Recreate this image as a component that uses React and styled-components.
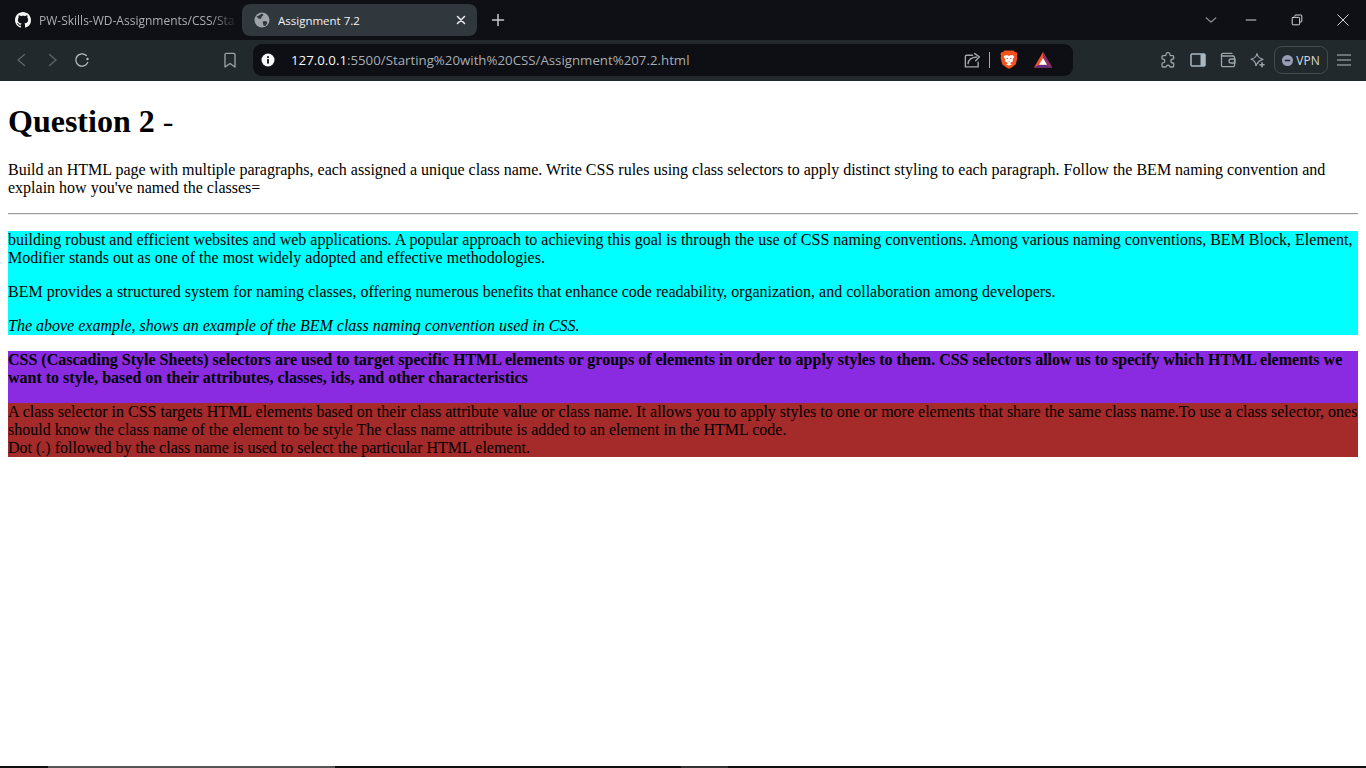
import React from 'react';
import styled, { createGlobalStyle } from 'styled-components';

const GlobalStyle = createGlobalStyle`
    html, body {
        margin: 0;
        padding: 0;
        height: 100%;
        background: #fff;
    }
    #root {
        height: 100%;
    }
`;

const Screen = styled.div`
    display: flex;
    flex-direction: column;
    width: 1366px;
    height: 768px;
    overflow: hidden;
`;

const TabStrip = styled.div`
    display: flex;
    align-items: center;
    height: 40px;
    background: #0e1015;
    font-family: "Open Sans", "Noto Sans", sans-serif;
`;

const Tab = styled.div`
    display: flex;
    align-items: center;
    flex: none;
    height: 32px;
    box-sizing: border-box;
    border-radius: 8px;
    background: ${(p) => (p.$active ? '#30373d' : 'transparent')};
    color: ${(p) => (p.$active ? '#f1f3f4' : '#a9aeb3')};
    font-size: ${(p) => (p.$active ? '11.5px' : '12px')};
    width: ${(p) => (p.$active ? '235px' : '234px')};
    margin-left: ${(p) => (p.$active ? '0' : '8px')};
    padding: ${(p) => (p.$active ? '0 8px 0 12px' : '0 4px 0 7px')};
`;

const TabTitle = styled.span`
    flex: 1;
    margin-left: 8px;
    white-space: nowrap;
    overflow: hidden;
    mask-image: ${(p) => (p.$fade ? 'linear-gradient(to right, #000 86%, transparent 100%)' : 'none')};
`;

const TabClose = styled.button`
    display: flex;
    align-items: center;
    justify-content: center;
    width: 16px;
    height: 16px;
    padding: 0;
    border: 0;
    background: none;
    color: #e8eaed;
`;

const NewTab = styled.button`
    display: flex;
    align-items: center;
    justify-content: center;
    width: 26px;
    height: 26px;
    margin-left: 8px;
    padding: 0;
    border: 0;
    background: none;
    color: #c4c8cc;
`;

const WindowControls = styled.div`
    display: flex;
    align-items: center;
    margin-left: auto;
    color: #f1f1f1;
`;

const ProfileChevron = styled.span`
    display: flex;
    justify-content: center;
    width: 20px;
    margin-right: 7px;
    color: #9aa0a6;
`;

const WindowButton = styled.span`
    display: flex;
    align-items: center;
    justify-content: center;
    width: 46px;
    height: 32px;
`;

const Toolbar = styled.div`
    display: flex;
    align-items: center;
    height: 41px;
    padding: 0 7px 1px;
    box-sizing: border-box;
    background: #22292d;
    color: #9aa5ab;
`;

const ToolButton = styled.span`
    display: flex;
    align-items: center;
    justify-content: center;
    flex: none;
    width: 30px;
    height: 30px;
    color: ${(p) => p.$color || 'inherit'};
`;

const BookmarkSlot = styled(ToolButton)`
    margin-left: 118px;
`;

const AddressBar = styled.div`
    display: flex;
    align-items: center;
    flex: 1;
    height: 32px;
    margin: 0 80px 0 8px;
    padding: 0 14px 0 7px;
    border-radius: 9px;
    background: #0d0f14;
`;

const InfoSlot = styled.span`
    display: flex;
    justify-content: center;
    width: 16px;
`;

const Url = styled.span`
    flex: 1;
    margin-left: 15px;
    font-family: "Open Sans", "Noto Sans", sans-serif;
    font-size: 13.27px;
    color: #a7adb3;
    white-space: nowrap;
`;

const Host = styled.span`
    color: #f4f6f8;
`;

const ShareSlot = styled.span`
    display: flex;
    color: #a2a8ac;
`;

const BarDivider = styled.span`
    width: 1px;
    height: 16px;
    margin: 0 10px 0 8px;
    background: #a2a8ac;
`;

const BatSlot = styled.span`
    display: flex;
    margin: 0 7px 0 16px;
`;

const VpnPill = styled.div`
    display: flex;
    align-items: center;
    justify-content: center;
    flex: none;
    gap: 3px;
    width: 54px;
    height: 28px;
    margin: 0 1px;
    box-sizing: border-box;
    border: 1px solid #414a50;
    border-radius: 8px;
    font-family: "Open Sans", "Noto Sans", sans-serif;
    font-size: 12px;
    color: #d5d9dc;
`;

const Page = styled.main`
    flex: 1;
    padding: 22px 8px 0;
    min-height: 0;
    background: #fff;
    color: #000;
    font-family: "Liberation Serif", "Times New Roman", serif;
    font-size: 16px;
    line-height: 18px;
`;

const Heading = styled.h1`
    margin: 0 0 21px;
    font-size: 32px;
    line-height: 37px;
    font-weight: bold;
`;

const Dash = styled.span`
    font-weight: normal;
`;

const Question = styled.p`
    margin: 0;
`;

const Rule = styled.hr`
    height: 0;
    margin: 16px 0;
    border: 0;
    border-top: 1px solid #9a9a9a;
    border-bottom: 1px solid #eee;
`;

const Note = styled.section`
    background: ${(p) => p.$bg};
    padding-bottom: ${(p) => p.$pad || '0'};
    margin-top: ${(p) => p.$top || '0'};
    font-weight: ${(p) => (p.$bold ? 'bold' : 'normal')};
`;

const NoteText = styled.p`
    margin: 0;
    & + & {
        margin-top: 16px;
    }
    font-style: ${(p) => (p.$italic ? 'italic' : 'normal')};
`;

const TaskbarEdge = styled.div`
    display: flex;
    flex: none;
    height: 2px;
    background: #111;
`;

const EdgePiece = styled.span`
    flex: none;
    width: ${(p) => p.$width}px;
    background: ${(p) => p.$color || 'transparent'};
`;

const Svg = ({ size = 16, children, fill = 'none', sw = 1.3 }) => (
    <svg width={size} height={size} viewBox="0 0 16 16" fill={fill} stroke={fill === 'none' ? 'currentColor' : 'none'} strokeWidth={sw} strokeLinecap="round" strokeLinejoin="round">
        {children}
    </svg>
);

const GithubIcon = () => (
    <svg width="16" height="16" viewBox="0 0 16 16" fill="#f5f5f5">
        <path d="M8 0C3.58 0 0 3.58 0 8c0 3.54 2.29 6.53 5.47 7.59.4.07.55-.17.55-.38 0-.19-.01-.82-.01-1.49-2.01.37-2.53-.49-2.69-.94-.09-.23-.48-.94-.82-1.13-.28-.15-.68-.52-.01-.53.63-.01 1.08.58 1.23.82.72 1.21 1.87.87 2.33.66.07-.52.28-.87.51-1.07-1.78-.2-3.64-.89-3.64-3.95 0-.87.31-1.59.82-2.15-.08-.2-.36-1.02.08-2.12 0 0 .67-.21 2.2.82.64-.18 1.32-.27 2-.27s1.36.09 2 .27c1.53-1.04 2.2-.82 2.2-.82.44 1.1.16 1.92.08 2.12.51.56.82 1.27.82 2.15 0 3.07-1.87 3.75-3.65 3.95.29.25.54.73.54 1.48 0 1.07-.01 1.93-.01 2.2 0 .21.15.46.55.38A8.01 8.01 0 0 0 16 8c0-4.42-3.58-8-8-8z" />
    </svg>
);

const GlobeIcon = () => (
    <svg width="16" height="16" viewBox="0 0 16 16">
        <circle cx="8" cy="8" r="7.5" fill="#9ea4a9" />
        <path d="M2.5 4.5 5 3.5 8 1.5 9.5 3 7.5 5 7 7 4.5 6.5ZM8.5 9.5 12 9l1.5 1.5-2 3.5-2-.5-.5-2Z" fill="#30373d" />
    </svg>
);

const InfoIcon = () => (
    <svg width="14" height="14" viewBox="0 0 14 14">
        <circle cx="7" cy="7" r="6.5" fill="#f4f6f8" />
        <rect x="6.1" y="6" width="1.8" height="4.6" fill="#0d0f14" />
        <rect x="6.1" y="3.2" width="1.8" height="1.8" fill="#0d0f14" />
    </svg>
);

const BraveIcon = () => (
    <svg width="18" height="20" viewBox="0 0 18 20">
        <path d="M4.5 0.5h9l1.4 1.6 2 .3.6 1.6-.6 2 .5 1.4-1.4 6.2c-.3 1-.8 1.5-1.6 2l-3.6 2.5c-.6.4-1.1.7-1.8.7s-1.2-.3-1.8-.7l-3.6-2.5c-.8-.5-1.3-1-1.6-2L.6 7.4l.5-1.4-.6-2 .6-1.6 2-.3Z" fill="#f1531f" />
        <path d="M5 5.2h2.6L9 5.9l1.4-.7H13l1.2 1.5-1.6 3 .6 1.2-2.2 1.5-1 .5 1.9 1.6L9 15.6 6.1 14.5l1.9-1.6-1-.5-2.2-1.5.6-1.2-1.6-3Z" fill="#fff" />
        <path d="M6 8h2l-.6 1.3ZM10 8h2l-1.4 1.3ZM8 11.500h2l-1 .8Z" fill="#f1531f" />
    </svg>
);

const BatIcon = () => (
    <svg width="18" height="16" viewBox="0 0 18 16">
        <path d="M9 0 18 15.500H0Z" fill="#f0502e" />
        <path d="M9 0 18 15.500 13 12.800 9 6Z" fill="#8e2a6c" />
        <path d="M0 15.500 5 12.800H13L18 15.500Z" fill="#5e2d8c" />
        <path d="M9 6 13 12.800H5Z" fill="#fff" />
    </svg>
);

const VpnDot = () => (
    <svg width="11" height="11" viewBox="0 0 11 11">
        <circle cx="5.500" cy="5.500" r="5.500" fill="#9a9db5" />
        <rect x="2.800" y="4.700" width="5.400" height="1.600" fill="#22292d" />
    </svg>
);

export default function App() {
    return (
        <Screen>
            <GlobalStyle />
            <TabStrip>
                <Tab>
                    <GithubIcon />
                    <TabTitle $fade>PW-Skills-WD-Assignments/CSS/Sta</TabTitle>
                </Tab>
                <Tab $active>
                    <GlobeIcon />
                    <TabTitle>Assignment 7.2</TabTitle>
                    <TabClose>
                        <Svg size={14} sw={1.8}><path d="M4 4l8 8M12 4l-8 8" /></Svg>
                    </TabClose>
                </Tab>
                <NewTab>
                    <Svg size={16} sw={1.5}><path d="M8 2.500v11M2.500 8h11" /></Svg>
                </NewTab>
                <WindowControls>
                    <ProfileChevron>
                        <Svg size={14} sw={1.3}><path d="M2.500 5.500 8 10.500l5.500-5" /></Svg>
                    </ProfileChevron>
                    <WindowButton>
                        <Svg size={14} sw={1}><path d="M2 8h12" strokeLinecap="butt" /></Svg>
                    </WindowButton>
                    <WindowButton>
                        <Svg size={14} sw={1}>
                            <rect x="2.500" y="5" width="8.500" height="8.500" rx="1" />
                            <path d="M5.500 3.500V3.300a1 1 0 0 1 1-1h6a1 1 0 0 1 1 1v6a1 1 0 0 1-1 1H12" />
                        </Svg>
                    </WindowButton>
                    <WindowButton>
                        <Svg size={14} sw={1}><path d="M2 2l12 12M14 2 2 14" /></Svg>
                    </WindowButton>
                </WindowControls>
            </TabStrip>

            <Toolbar>
                <ToolButton $color="#5d666b">
                    <Svg size={16}><path d="M10.500 2.500 4 8l6.500 5.500" /></Svg>
                </ToolButton>
                <ToolButton $color="#5d666b">
                    <Svg size={16}><path d="M5.500 2.500 12 8l-6.500 5.500" /></Svg>
                </ToolButton>
                <ToolButton $color="#b4bdc2">
                    <Svg size={16}>
                        <path d="M13.700 10.500A6.200 6.200 0 1 1 12.300 3.500" />
                        <circle cx="13.500" cy="7" r="1.200" fill="currentColor" stroke="none" />
                    </Svg>
                </ToolButton>
                <BookmarkSlot>
                    <Svg size={16}><path d="M3 2.500a1.200 1.200 0 0 1 1.200-1.200h7.600A1.200 1.200 0 0 1 13 2.500V15l-5-3.500L3 15Z" /></Svg>
                </BookmarkSlot>
                <AddressBar>
                    <InfoSlot><InfoIcon /></InfoSlot>
                    <Url><Host>127.0.0.1</Host>:5500/Starting%20with%20CSS/Assignment%207.2.html</Url>
                    <ShareSlot>
                        <Svg size={17}>
                            <path d="M8 3H2.500A1.200 1.200 0 0 0 1.300 4.200V14h12V9.500" />
                            <path d="M3.800 11c.5-4 3-6 8-6.300M10 1.500l4.500 3-3.500 3.800" />
                        </Svg>
                    </ShareSlot>
                    <BarDivider />
                    <BraveIcon />
                    <BatSlot><BatIcon /></BatSlot>
                </AddressBar>
                <ToolButton>
                    <Svg size={16}>
                        <path d="M6 2.500a2 2 0 0 1 4 .3c0 .6.400.9 1 .9h1.700c.7 0 1 .4 1 1v1.500c0 .5-.3.800-.8.800a2 2 0 0 0 0 4c.5 0 .8.300.8.800V14c0 .6-.4 1-1 1H10.500c-.6 0-.9-.4-1-.9a1.600 1.600 0 0 0-3 0c-.1.500-.4.900-1 .9H3c-.6 0-1-.4-1-1v-2.200c0-.6.500-1 1-1a1.800 1.800 0 0 0 0-3.600c-.5 0-1-.4-1-1V4.700c0-.6.400-1 1-1h2c.6 0 1-.5 1-1.200Z" />
                    </Svg>
                </ToolButton>
                <ToolButton $color="#a9b8c0">
                    <Svg size={16} sw={1.500}>
                        <rect x="1" y="2" width="14" height="12" rx="1" />
                        <rect x="10.500" y="2" width="4.500" height="12" fill="currentColor" stroke="none" />
                    </Svg>
                </ToolButton>
                <ToolButton>
                    <Svg size={16}>
                        <path d="M13 4H3a1.500 1.500 0 0 1-1.500-1.500A1.500 1.500 0 0 1 3 1.300h9" />
                        <path d="M1.500 2.500v10.700A1.500 1.500 0 0 0 3 14.700h10a1.500 1.500 0 0 0 1.500-1.500V5.500A1.500 1.500 0 0 0 13 4" />
                        <path d="M15 7h-4a2 2 0 0 0 0 4h4Z" />
                    </Svg>
                </ToolButton>
                <ToolButton>
                    <Svg size={16}>
                        <path d="M7 1.500C7.600 4.800 9 6.300 13 7.300 9.800 8.200 8.300 9.500 7.800 11M7 1.500C6.400 4.800 5 6.300 1 7.300c3 .9 4.400 2 5 6.200" strokeWidth="1.200" />
                        <path d="M6 13.500c.3-1 1-1.800 1.800-2.500" strokeWidth="1.200" />
                        <path d="M12 10.800v4M10 12.800h4" strokeWidth="1.600" />
                    </Svg>
                </ToolButton>
                <VpnPill><VpnDot />VPN</VpnPill>
                <ToolButton $color="#b4bdc2">
                    <Svg size={16} sw={1.200}><path d="M1 3h14M1 8h14M1 13h14" strokeLinecap="butt" /></Svg>
                </ToolButton>
            </Toolbar>

            <Page>
                <Heading>Question 2 <Dash>-</Dash></Heading>
                <Question>
                    Build an HTML page with multiple paragraphs, each assigned a unique class name. Write CSS rules using class selectors to apply distinct styling to each paragraph. Follow the BEM naming convention and explain how you've named the classes=
                </Question>
                <Rule />
                <Note $bg="#00ffff">
                    <NoteText>
                        building robust and efficient websites and web applications. A popular approach to achieving this goal is through the use of CSS naming conventions. Among various naming conventions, BEM Block, Element, Modifier stands out as one of the most widely adopted and effective methodologies.
                    </NoteText>
                    <NoteText>
                        BEM provides a structured system for naming classes, offering numerous benefits that enhance code readability, organization, and collaboration among developers.
                    </NoteText>
                    <NoteText $italic>
                        The above example, shows an example of the BEM class naming convention used in CSS.
                    </NoteText>
                </Note>
                <Note $bg="#8a2be2" $bold $top="16px" $pad="16px">
                    <NoteText>
                        CSS (Cascading Style Sheets) selectors are used to target specific HTML elements or groups of elements in order to apply styles to them. CSS selectors allow us to specify which HTML elements we want to style, based on their attributes, classes, ids, and other characteristics
                    </NoteText>
                </Note>
                <Note $bg="#a52a2a">
                    <NoteText>
                        A class selector in CSS targets HTML elements based on their class attribute value or class name. It allows you to apply styles to one or more elements that share the same class name.To use a class selector, ones should know the class name of the element to be style The class name attribute is added to an element in the HTML code.
                        <br />
                        Dot (.) followed by the class name is used to select the particular HTML element.
                    </NoteText>
                </Note>
            </Page>

            <TaskbarEdge>
                <EdgePiece $width={48} />
                <EdgePiece $width={287} $color="#555" />
                <EdgePiece $width={346} />
                <EdgePiece $width={47} $color="#333" />
            </TaskbarEdge>
        </Screen>
    );
}
